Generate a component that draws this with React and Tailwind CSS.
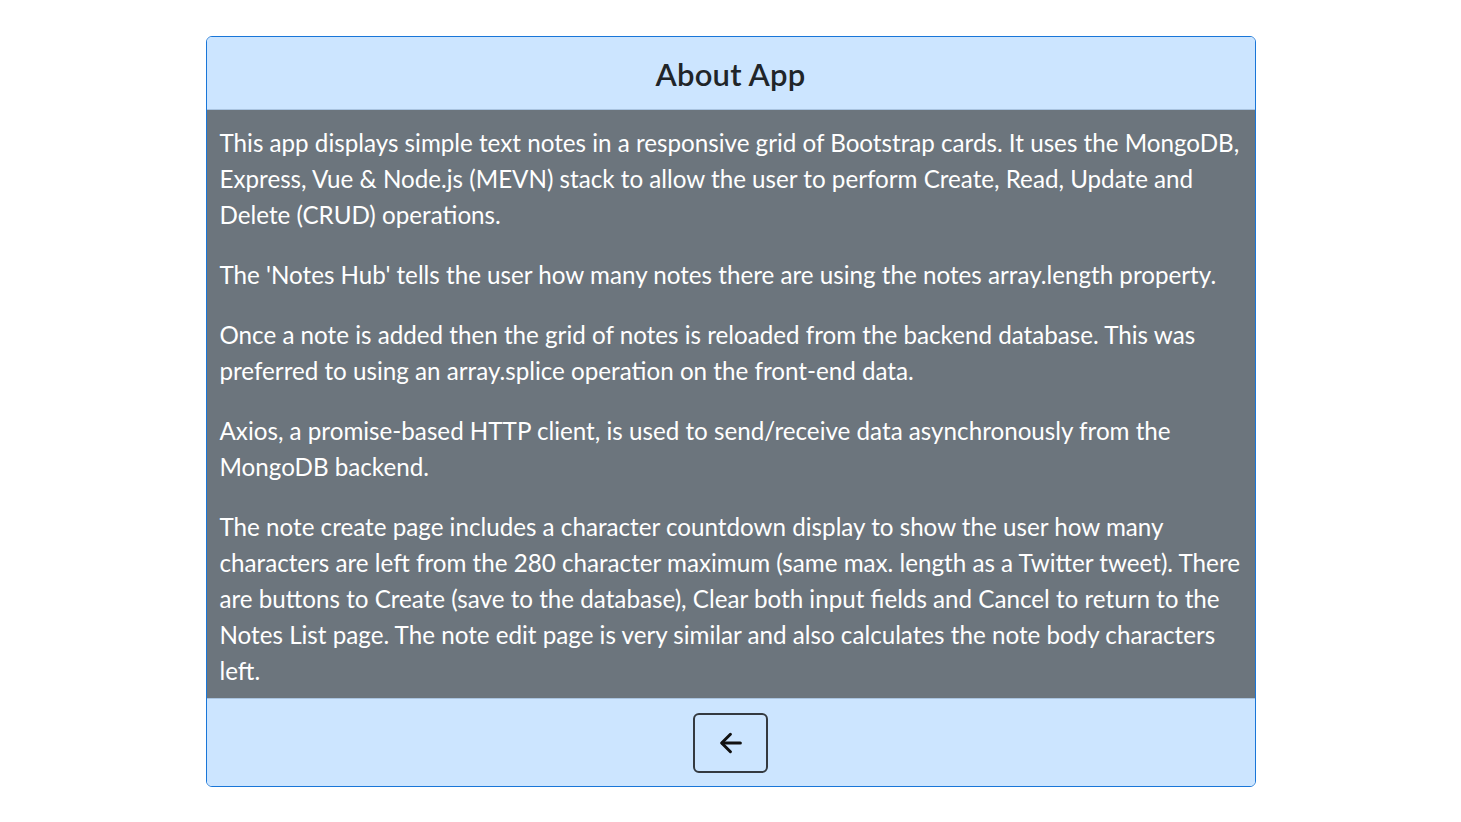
export default function App() {
  const paras = [
    ["This app displays simple text notes in a responsive grid of Bootstrap cards. It uses the MongoDB,", "Express, Vue & Node.js (MEVN) stack to allow the user to perform Create, Read, Update and", "Delete (CRUD) operations."],
    ["The 'Notes Hub' tells the user how many notes there are using the notes array.length property."],
    ["Once a note is added then the grid of notes is reloaded from the backend database. This was", "preferred to using an array.splice operation on the front-end data."],
    ["Axios, a promise-based HTTP client, is used to send/receive data asynchronously from the", "MongoDB backend."],
    ["The note create page includes a character countdown display to show the user how many", "characters are left from the 280 character maximum (same max. length as a Twitter tweet). There", "are buttons to Create (save to the database), Clear both input fields and Cancel to return to the", "Notes List page. The note edit page is very similar and also calculates the note body characters", "left."],
  ];
  return (
    <div className="w-[1461px] h-[822px] bg-white flex justify-center pt-[36px]" style={{ fontFamily: '"Lato", "Open Sans", sans-serif' }}>
      <div className="w-[1050px] h-[751px] border border-[#1976d8] rounded-[6px] overflow-hidden flex flex-col">
        <div className="h-[73px] bg-[#cce5ff] border-b border-[#a9c3df] flex items-center justify-center pt-[3px]">
          <h4 className="text-[31px] font-semibold text-[#212529] leading-none tracking-[0.2px]">About App</h4>
        </div>
        <div className="bg-[#6c757d] text-white px-[13px] pt-[15px] pb-[9px] text-[24.2px] leading-[36px] flex flex-col gap-[24px]">
          {paras.map((p, i) => (
            <p key={i} className="whitespace-nowrap">
              {p.map((l, j) => (
                <span key={j} className="block">{l}</span>
              ))}
            </p>
          ))}
        </div>
        <div className="flex-1 bg-[#cce5ff] border-t border-[#a9c3df] flex justify-center pt-[14px]">
          <button className="w-[75px] h-[60px] border-2 border-[#343a40] rounded-[6px] flex items-center justify-center">
            <svg width="28" height="28" viewBox="0 0 24 24" fill="none" stroke="#111" strokeWidth="2.6" strokeLinecap="round" strokeLinejoin="round">
              <path d="M20 12H4.5" />
              <path d="M11.5 4.5L4 12l7.5 7.5" />
            </svg>
          </button>
        </div>
      </div>
    </div>
  );
}
